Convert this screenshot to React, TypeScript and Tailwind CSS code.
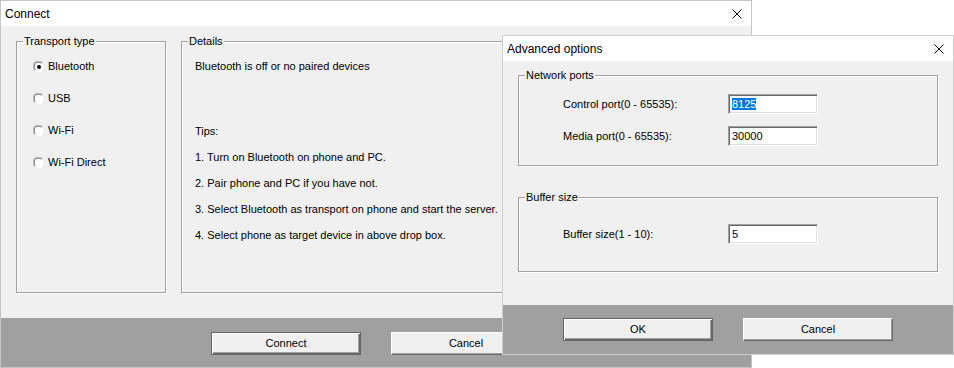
import type { ReactNode } from 'react';

const font = { fontFamily: '"Liberation Sans", Arial, sans-serif' };

function CloseIcon() {
  return (
    <svg width="10" height="10" viewBox="0 0 10 10" className="shrink-0">
      <path d="M0.5 0.5 L9.5 9.5 M9.5 0.5 L0.5 9.5" stroke="#000" strokeWidth="1" />
    </svg>
  );
}

function Radio({ checked }: { checked?: boolean }) {
  return (
    <svg width="12" height="12" viewBox="0 0 12 12" className="shrink-0">
      <circle cx="6" cy="6" r="5.5" fill="#fff" />
      <path d="M1.5 9.5 A5.5 5.5 0 0 1 9.5 1.5" fill="none" stroke="#a0a0a0" strokeWidth="1" />
      <path d="M2.4 8.6 A4.3 4.3 0 0 1 8.6 2.4" fill="none" stroke="#696969" strokeWidth="1" />
      <path d="M10.5 2.5 A5.5 5.5 0 0 1 2.5 10.5" fill="none" stroke="#e3e3e3" strokeWidth="1" />
      {checked && <circle cx="6" cy="6" r="2" fill="#000" />}
    </svg>
  );
}

function GroupBox({ label, className, children }: { label: string; className?: string; children?: ReactNode }) {
  return (
    <div className={`relative border border-[#a0a0a0] shadow-[1px_1px_0_#fff,inset_1px_1px_0_#fff] ${className ?? ''}`}>
      <span className="absolute left-[6px] top-[-7px] bg-[#f0f0f0] px-[1px] text-[11px] leading-[13px] text-black">
        {label}
      </span>
      {children}
    </div>
  );
}

function Button({ label, primary }: { label: string; primary?: boolean }) {
  return (
    <div
      className={
        primary
          ? 'flex h-[23px] w-[150px] items-center justify-center border border-[#646464] bg-[#f0f0f0] text-[11px] text-black shadow-[inset_1px_1px_0_#fff,inset_-1px_-1px_0_#696969,inset_-2px_-2px_0_#a0a0a0]'
          : 'flex h-[23px] w-[150px] items-center justify-center border border-t-white border-l-white border-r-[#696969] border-b-[#696969] bg-[#f0f0f0] text-[11px] text-black shadow-[inset_-1px_-1px_0_#a0a0a0]'
      }
    >
      {label}
    </div>
  );
}

function TextBox({ value, selected }: { value: string; selected?: boolean }) {
  return (
    <div className="flex h-[20px] w-[90px] items-center border border-t-[#a0a0a0] border-l-[#a0a0a0] border-r-white border-b-white bg-white pl-[3px] text-[11px] text-black shadow-[inset_1px_1px_0_#696969,inset_-1px_-1px_0_#e3e3e3]">
      {selected ? <span className="bg-[#0078d7] leading-[12px] text-white">{value}</span> : <span>{value}</span>}
    </div>
  );
}

function TitleBar({ title }: { title: string }) {
  return (
    <div className="flex h-[25px] shrink-0 items-center justify-between bg-white pl-[4px] pr-[9px]">
      <span className="text-[12px] leading-[14px] text-black">{title}</span>
      <CloseIcon />
    </div>
  );
}

const transports = ['Bluetooth', 'USB', 'Wi-Fi', 'Wi-Fi Direct'];
const tips = [
  '1. Turn on Bluetooth on phone and PC.',
  '2. Pair phone and PC if you have not.',
  '3. Select Bluetooth as transport on phone and start the server.',
  '4. Select phone as target device in above drop box.',
];

function ConnectWindow() {
  return (
    <div className="absolute left-0 top-0 flex h-[368px] w-[752px] flex-col border border-[#c4c4c4]">
      <TitleBar title="Connect" />
      <div className="flex h-[292px] shrink-0 gap-[15px] bg-[#f0f0f0] px-[15px] pt-[15px]">
        <GroupBox label="Transport type" className="h-[252px] w-[150px] shrink-0">
          <div className="flex flex-col gap-[19px] pl-[16px] pt-[18px]">
            {transports.map((t, i) => (
              <div key={t} className="flex h-[13px] items-center gap-[3px] text-[11px] leading-[13px] text-black">
                <Radio checked={i === 0} />
                <span>{t}</span>
              </div>
            ))}
          </div>
        </GroupBox>
        <GroupBox label="Details" className="h-[252px] flex-1">
          <div className="flex flex-col pl-[13px] pt-[18px] text-[11px] leading-[13px] text-black">
            <div>Bluetooth is off or no paired devices</div>
            <div className="mt-[52px]">Tips:</div>
            {tips.map((t) => (
              <div key={t} className="mt-[13px]">
                {t}
              </div>
            ))}
          </div>
        </GroupBox>
      </div>
      <div className="flex flex-1 justify-center gap-[30px] bg-[#a0a0a0] pt-[14px]">
        <Button label="Connect" primary />
        <Button label="Cancel" />
      </div>
    </div>
  );
}

function PortRow({ label, value, selected }: { label: string; value: string; selected?: boolean }) {
  return (
    <div className="flex h-[20px] items-center pl-[44px] text-[11px] text-black">
      <span className="w-[165px] shrink-0">{label}</span>
      <TextBox value={value} selected={selected} />
    </div>
  );
}

function AdvancedWindow() {
  return (
    <div className="absolute left-[502px] top-[35px] flex h-[320px] w-[452px] flex-col border border-[#cfcfcf]">
      <TitleBar title="Advanced options" />
      <div className="flex h-[244px] shrink-0 flex-col gap-[31px] bg-[#f0f0f0] px-[15px] pt-[14px]">
        <GroupBox label="Network ports">
          <div className="flex flex-col gap-[12px] pb-[19px] pt-[18px]">
            <PortRow label="Control port(0 - 65535):" value="8125" selected />
            <PortRow label="Media port(0 - 65535):" value="30000" />
          </div>
        </GroupBox>
        <GroupBox label="Buffer size">
          <div className="pb-[27px] pt-[26px]">
            <PortRow label="Buffer size(1 - 10):" value="5" />
          </div>
        </GroupBox>
      </div>
      <div className="flex flex-1 justify-center gap-[30px] bg-[#a0a0a0] pt-[13px]">
        <Button label="OK" primary />
        <Button label="Cancel" />
      </div>
    </div>
  );
}

export default function App() {
  return (
    <div className="relative h-[368px] w-[954px] overflow-hidden bg-white" style={font}>
      <ConnectWindow />
      <AdvancedWindow />
    </div>
  );
}
